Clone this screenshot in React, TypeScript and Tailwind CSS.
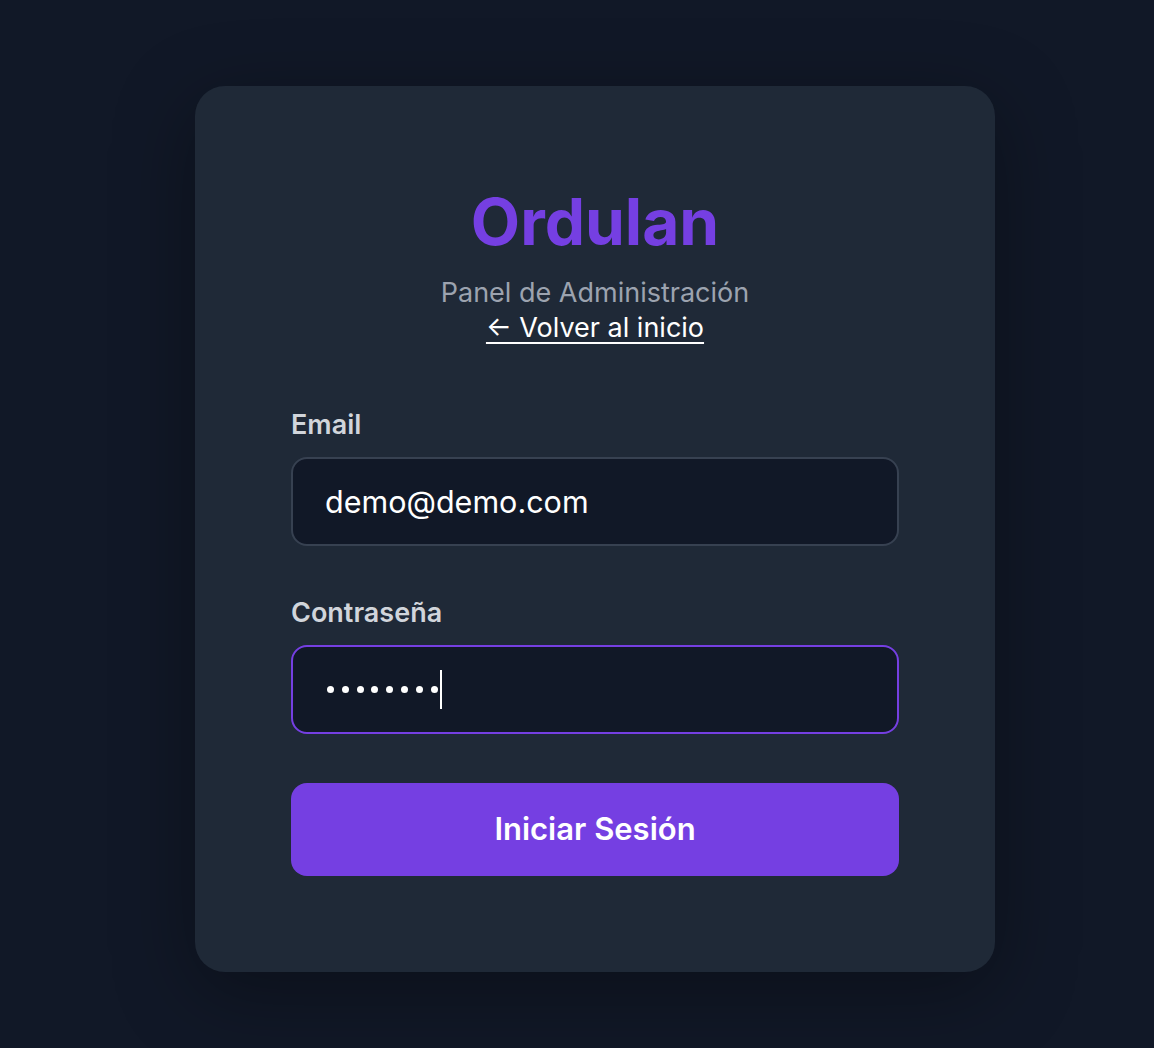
const Field = ({ label, children }: { label: string; children: React.ReactNode }) => (
  <div className="flex flex-col">
    <label className="text-[27px] leading-[35px] font-semibold text-[#d1d5db] mb-[15px]">{label}</label>
    {children}
  </div>
);

const App = () => {
  return (
    <div
      className="min-h-screen bg-[#111827] flex justify-center items-start pt-[86px] pl-[36px] pb-[77px]"
      style={{ fontFamily: "Inter, 'Noto Sans', sans-serif" }}
    >
      <div className="w-[800px] bg-[#1f2937] rounded-[30px] px-[96px] pt-[96px] pb-[96px] shadow-[0_20px_80px_rgba(0,0,0,0.35)]">
        <div className="flex flex-col items-center text-center">
          <h1 className="text-[64px] leading-[80px] font-bold text-[#753fe2]">Ordulan</h1>
          <p className="mt-[13px] text-[27px] leading-[35px] text-[#9ca3af]">Panel de Administración</p>
          <a href="#" className="text-[27px] leading-[35px] text-white underline underline-offset-[5px] decoration-[2px]">
            ← Volver al inicio
          </a>
        </div>

        <form className="mt-[62px] flex flex-col gap-[49px]" onSubmit={(e) => e.preventDefault()}>
          <Field label="Email">
            <input
              type="email"
              readOnly
              value="demo@demo.com"
              className="h-[89px] w-full rounded-[16px] border-2 border-[#374151] bg-[#111827] px-[32px] text-[30.5px] text-white outline-none"
            />
          </Field>
          <Field label="Contraseña">
            <div className="h-[89px] w-full rounded-[16px] border-2 border-[#753fe2] bg-[#111827] px-[34px] flex items-center">
              <div className="flex items-center gap-[7.8px]">
                {Array.from({ length: 8 }).map((_, i) => (
                  <span key={i} className="w-[7px] h-[7px] rounded-full bg-white" />
                ))}
              </div>
              <span className="ml-[2px] w-[2px] h-[39px] bg-white" />
            </div>
          </Field>
          <button
            type="submit"
            className="h-[93px] w-full rounded-[16px] bg-[#753fe2] text-white text-[31px] font-semibold"
          >
            Iniciar Sesión
          </button>
        </form>
      </div>
    </div>
  );
};

export default App;
